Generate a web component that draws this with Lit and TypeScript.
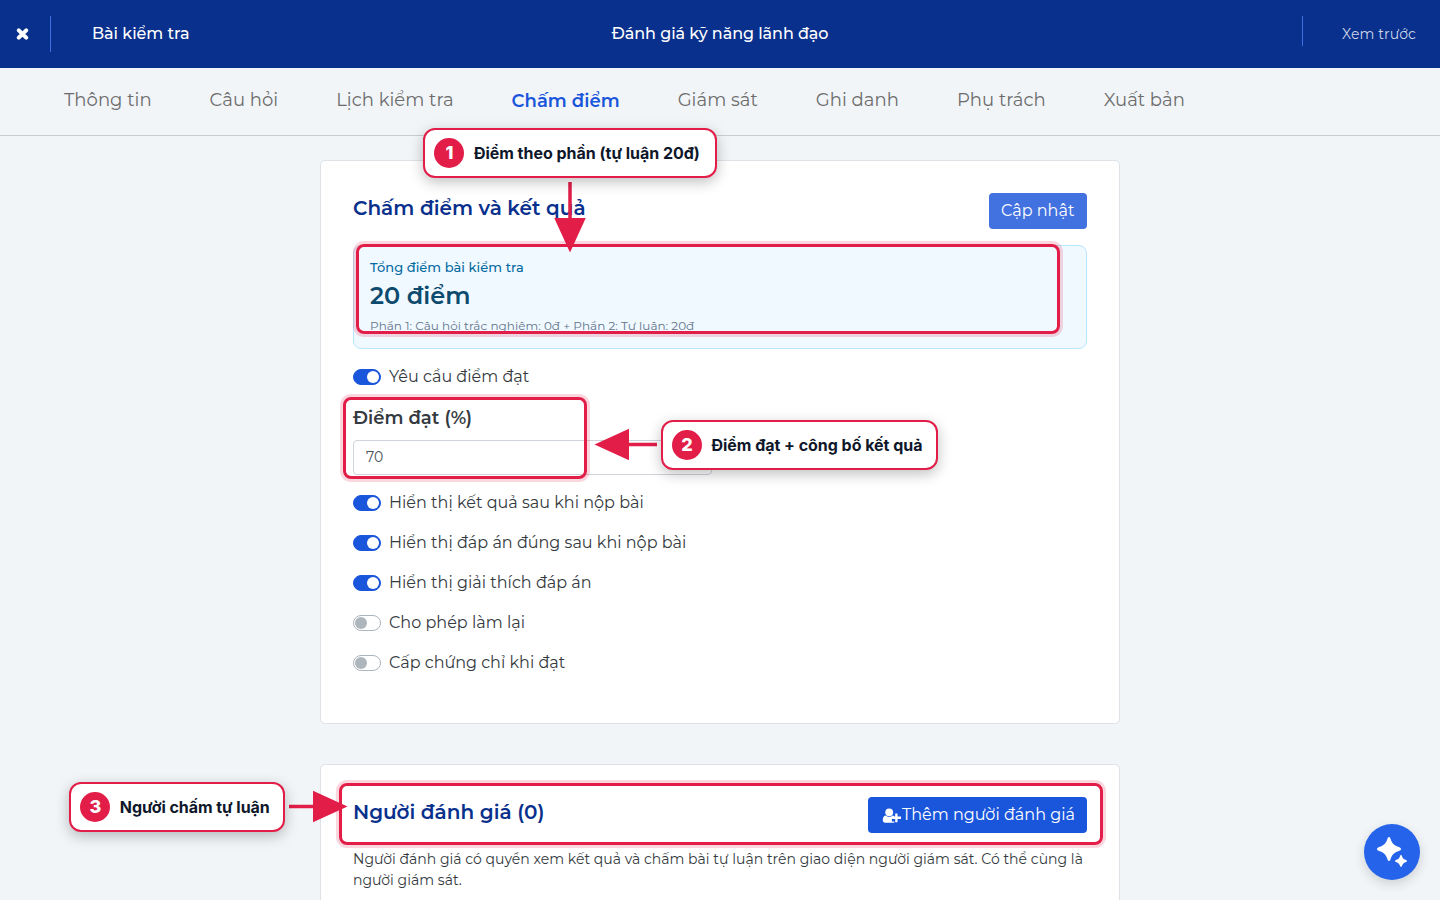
import { LitElement, html, css, svg } from "lit";
import { customElement, property } from "lit/decorators.js";
import { classMap } from "lit/directives/class-map.js";

/** Text run tracked out to an exact measure. */
@customElement("tracked-text")
class TrackedText extends LitElement {
  static styles = css`
    :host { display: inline-block; white-space: nowrap; flex: none; }
  `;
  @property({ type: Number }) measure = 0;

  firstUpdated() {
    const count = [...(this.textContent ?? "").normalize("NFC").trim()].length;
    if (!this.measure || count < 2) return;
    this.style.letterSpacing = "0px";
    const natural = this.getBoundingClientRect().width;
    const spacing = (this.measure - natural) / (count - 1);
    this.style.letterSpacing = `${spacing}px`;
    this.style.marginRight = `${-spacing}px`;
  }

  render() {
    return html`<slot></slot>`;
  }
}

@customElement("switch-row")
class SwitchRow extends LitElement {
  static styles = css`
    :host { display: flex; align-items: flex-start; height: 24px; gap: 8px; font-size: 16px; line-height: 24px; color: #343a40; }
    .track { box-sizing: border-box; width: 28px; height: 16px; margin-top: 4px; border: 1px solid #adb5bd; border-radius: 8px; padding: 1px; display: flex; background: #fff; flex: none; }
    .knob { width: 12px; height: 12px; border-radius: 50%; background: #adb5bd; }
    .on { background: #1a56db; border-color: #1a56db; justify-content: flex-end; }
    .on .knob { background: #fff; }
  `;
  @property({ type: Boolean }) on = false;
  @property() label = "";

  render() {
    return html`
      <span class=${classMap({ track: true, on: this.on })}><span class="knob"></span></span>
      <tracked-text>${this.label}</tracked-text>
    `;
  }
}

@customElement("step-note")
class StepNote extends LitElement {
  static styles = css`
    :host { box-sizing: border-box; display: flex; align-items: center; gap: 9.5px; height: 50px; padding: 0 0 0 9px; border: 2px solid #e11d48; border-radius: 12px; background: #fff; box-shadow: 0 4px 14px rgba(0, 0, 0, 0.25); font: 700 16px/24px Inter, sans-serif; color: #0f172a; }
    .num { width: 30px; height: 30px; border-radius: 50%; background: #e11d48; color: #fff; font-size: 18px; font-weight: 800; line-height: 30px; text-align: center; flex: none; }
  `;
  @property({ type: Number }) step = 1;
  @property() label = "";
  @property({ type: Number }) measure = 0;

  render() {
    return html`<span class="num">${this.step}</span><tracked-text measure=${this.measure}>${this.label}</tracked-text>`;
  }
}

const TABS = [
  { label: "Thông tin" },
  { label: "Câu hỏi" },
  { label: "Lịch kiểm tra" },
  { label: "Chấm điểm", active: true },
  { label: "Giám sát" },
  { label: "Ghi danh" },
  { label: "Phụ trách" },
  { label: "Xuất bản" },
];

const OPTIONS = [
  { label: "Hiển thị kết quả sau khi nộp bài", on: true },
  { label: "Hiển thị đáp án đúng sau khi nộp bài", on: true },
  { label: "Hiển thị giải thích đáp án", on: true },
  { label: "Cho phép làm lại", on: false },
  { label: "Cấp chứng chỉ khi đạt", on: false },
];

@customElement("app-root")
class AppRoot extends LitElement {
  static styles = css`
    :host { display: block; position: relative; width: 1440px; height: 900px; overflow: hidden; background: #f1f5f8; font-family: Montserrat, Inter, "Noto Sans", sans-serif; letter-spacing: 0.02px; color: #343a40; }
    * { box-sizing: border-box; }
    .top { height: 68px; background: #08308c; color: #fff; display: grid; grid-template-columns: 1fr auto 1fr; align-items: start; padding: 16px 24px 0 16px; font-size: 16px; font-weight: 500; line-height: 35px; }
    .left { display: flex; }
    .close { margin: 11px 0 0; width: 13px; height: 14px; display: block; }
    .rule { width: 1px; height: 36px; background: #3f6fe0; margin: 0 41px 0 21px; }
    .right { display: flex; justify-content: flex-end; font-size: 14px; font-weight: 400; line-height: 36px; color: #ced6e8; }
    .rule.short { height: 30px; margin: 0 39.5px 0 0; }
    .title { margin-left: 8px; }
    .tabs { height: 68px; border-bottom: 1px solid #c9ced3; display: flex; gap: 58px; padding: 20px 0 0 64px; font-size: 18px; letter-spacing: 0.03px; line-height: 24px; color: #6c6c6c; }
    .tabs .active { font-weight: 600; color: #1a56db; padding-top: 1px; }
    .main { width: 800px; margin: 24px auto 0; display: flex; flex-direction: column; gap: 40px; }
    .card { border: 1px solid #dee2e6; border-radius: 5px; background: #fff; padding: 32px; height: 564px; }
    .card.second { height: 200px; }
    .head { display: flex; justify-content: space-between; height: 36px; }
    .h { font-size: 20px; font-weight: 600; line-height: 30px; color: #08308c; }
    .btn { height: 36px; border-radius: 4px; background: #1a56db; color: #fff; font-size: 16px; line-height: 35px; display: flex; padding: 0 12px; }
    .btn.busy { background: #4271e0; width: 98px; }
    .btn svg { width: 20px; height: 15px; margin: 11px -0.5px 0 2.5px; flex: none; }
    .sum { margin-top: 16px; height: 104px; border: 1px solid #bae6fd; border-radius: 8px; background: #f0f9ff; padding: 11px 16px; display: flex; flex-direction: column; align-items: flex-start; }
    .sum .cap { font-size: 13px; font-weight: 500; letter-spacing: 0.05px; line-height: 20px; color: #0369a1; }
    .sum .big { font-size: 24px; font-weight: 600; line-height: 36px; color: #0c4a6e; margin-top: 1px; }
    .sum .parts { font-size: 12px; line-height: 18px; color: #64748b; margin-top: 3px; }
    .req { margin-top: 16px; }
    .field { margin: 17px 0 16px; display: flex; flex-direction: column; align-items: flex-start; }
    .field .lab { font-size: 18px; font-weight: 600; line-height: 24px; height: 34px; }
    .input { width: 359px; height: 35px; border: 1px solid #ced4da; border-radius: 4px; padding: 0 12px; font-size: 14px; line-height: 33px; color: #495057; }
    .opts { display: flex; flex-direction: column; gap: 16px; }
    .desc { margin-top: 16px; font-size: 14px; line-height: 21px; display: flex; flex-direction: column; align-items: flex-start; }
    .box { position: absolute; border: 3px solid #e11d48; border-radius: 8px; box-shadow: 0 0 0 3px rgba(225, 29, 72, 0.18); }
    .b1 { left: 356px; top: 244px; width: 704px; height: 90px; }
    .b2 { left: 343px; top: 397px; width: 244px; height: 82px; }
    .b3 { left: 339px; top: 783px; width: 764px; height: 62px; }
    .arrows { position: absolute; left: 0; top: 0; width: 1440px; height: 900px; fill: #e11d48; }
    step-note { position: absolute; }
    .n1 { left: 423.4px; top: 128px; width: 293.300px; }
    .n2 { left: 661px; top: 420px; width: 277px; }
    .n3 { left: 69.300px; top: 782px; width: 216px; }
    .fab { position: absolute; left: 1364px; top: 824px; width: 56px; height: 56px; border-radius: 50%; background: #2563eb; box-shadow: 0 4px 12px rgba(0, 0, 0, 0.15); }
    .fab svg { display: block; width: 56px; height: 56px; fill: #fff; }
  `;

  render() {
    const arrows = svg`
      <path d="M568.25 182h3.5v36h14l-15.75 34.5L554.25 218h14z"/>
      <path d="M657 442.75v3.5h-28v14l-34.5-15.75L629 428.75v14z"/>
      <path d="M289 804.75v3.5h24v14l34.5-15.75L313 790.75v14z"/>`;
    return html`
      <header class="top">
        <div class="left">
          <svg class="close" viewBox="0 0 13 14"><path d="M2.8 3.3l7.4 7.4M10.2 3.3l-7.4 7.4" stroke="#fff" stroke-width="4" stroke-linecap="round" /></svg>
          <span class="rule"></span>
          <tracked-text measure="97.5">Bài kiểm tra</tracked-text>
        </div>
        <tracked-text class="title" measure="217">Đánh giá kỹ năng lãnh đạo</tracked-text>
        <div class="right">
          <span class="rule short"></span>
          <tracked-text measure="74">Xem trước</tracked-text>
        </div>
      </header>
      <nav class="tabs">
        ${TABS.map((t) => html`<tracked-text class=${classMap({ active: !!t.active })}>${t.label}</tracked-text>`)}
      </nav>
      <main class="main">
        <section class="card">
          <div class="head">
            <tracked-text class="h">Chấm điểm và kết quả</tracked-text>
            <div class="btn busy"><tracked-text>Cập nhật</tracked-text></div>
          </div>
          <div class="sum">
            <tracked-text class="cap">Tổng điểm bài kiểm tra</tracked-text>
            <tracked-text class="big">20 điểm</tracked-text>
            <tracked-text class="parts">Phần 1: Câu hỏi trắc nghiệm: 0đ + Phần 2: Tự luận: 20đ</tracked-text>
          </div>
          <switch-row class="req" on label="Yêu cầu điểm đạt"></switch-row>
          <div class="field">
            <tracked-text class="lab">Điểm đạt (%)</tracked-text>
            <div class="input"><tracked-text>70</tracked-text></div>
          </div>
          <div class="opts">
            ${OPTIONS.map((o) => html`<switch-row ?on=${o.on} label=${o.label}></switch-row>`)}
          </div>
        </section>
        <section class="card second">
          <div class="head">
            <tracked-text class="h">Người đánh giá (0)</tracked-text>
            <div class="btn">
              <svg viewBox="0 0 20 15" fill="#fff">
                <circle cx="7.2" cy="4.3" r="3.9" />
                <path d="M3.6 7.6c1 .8 2.2 1.3 3.6 1.3s2.6-.5 3.6-1.3c.6.1 1.1.3 1.5.6v2.1H9.9v3.2h2.4v1.1c-.3.1-.6.2-1 .2H3.3C1.7 14.8.8 13.9.8 12.3c0-2.2.7-4.4 2.8-4.7z" />
                <path d="M13.2 5.6h2.3v3h3.5v2.3h-3.5v3.3h-2.3v-3.3h-3V8.6h3z" />
              </svg>
              <tracked-text measure="173">Thêm người đánh giá</tracked-text>
            </div>
          </div>
          <div class="desc">
            <tracked-text>Người đánh giá có quyền xem kết quả và chấm bài tự luận trên giao diện người giám sát. Có thể cùng là</tracked-text>
            <tracked-text>người giám sát.</tracked-text>
          </div>
        </section>
      </main>
      <div class="box b1"></div>
      <div class="box b2"></div>
      <div class="box b3"></div>
      <svg class="arrows" viewBox="0 0 1440 900">${arrows}</svg>
      <step-note class="n1" step="1" label="Điểm theo phần (tự luận 20đ)" measure="226"></step-note>
      <step-note class="n2" step="2" label="Điểm đạt + công bố kết quả" measure="211"></step-note>
      <step-note class="n3" step="3" label="Người chấm tự luận" measure="150"></step-note>
      <div class="fab">
        <svg viewBox="0 0 56 56">
          <path d="M25 13c1 0 1.2.8 1.7 2.2 1.5 4.3 3.2 6 7.5 7.5 1.6.6 2.8 1 2.8 2.3s-1.2 1.7-2.8 2.3c-4.3 1.5-6 3.2-7.5 7.5-.5 1.4-.7 2.2-1.7 2.2s-1.2-.8-1.7-2.2c-1.5-4.3-3.2-6-7.5-7.5-1.6-.6-2.8-1-2.8-2.3s1.2-1.7 2.8-2.3c4.3-1.5 6-3.2 7.5-7.5.5-1.4.7-2.2 1.7-2.2z" />
          <path d="M37 31c.6 0 .8.6 1.1 1.4.7 1.9 1.6 2.7 3.4 3.4.9.3 1.4.5 1.4 1.2s-.5.9-1.4 1.2c-1.8.7-2.7 1.5-3.4 3.4-.3.8-.5 1.4-1.1 1.4s-.8-.6-1.1-1.4c-.7-1.9-1.6-2.7-3.4-3.4-.9-.3-1.4-.5-1.4-1.2s.5-.9 1.4-1.2c1.8-.7 2.7-1.5 3.4-3.4.3-.8.5-1.4 1.1-1.4z" />
        </svg>
      </div>
    `;
  }
}
